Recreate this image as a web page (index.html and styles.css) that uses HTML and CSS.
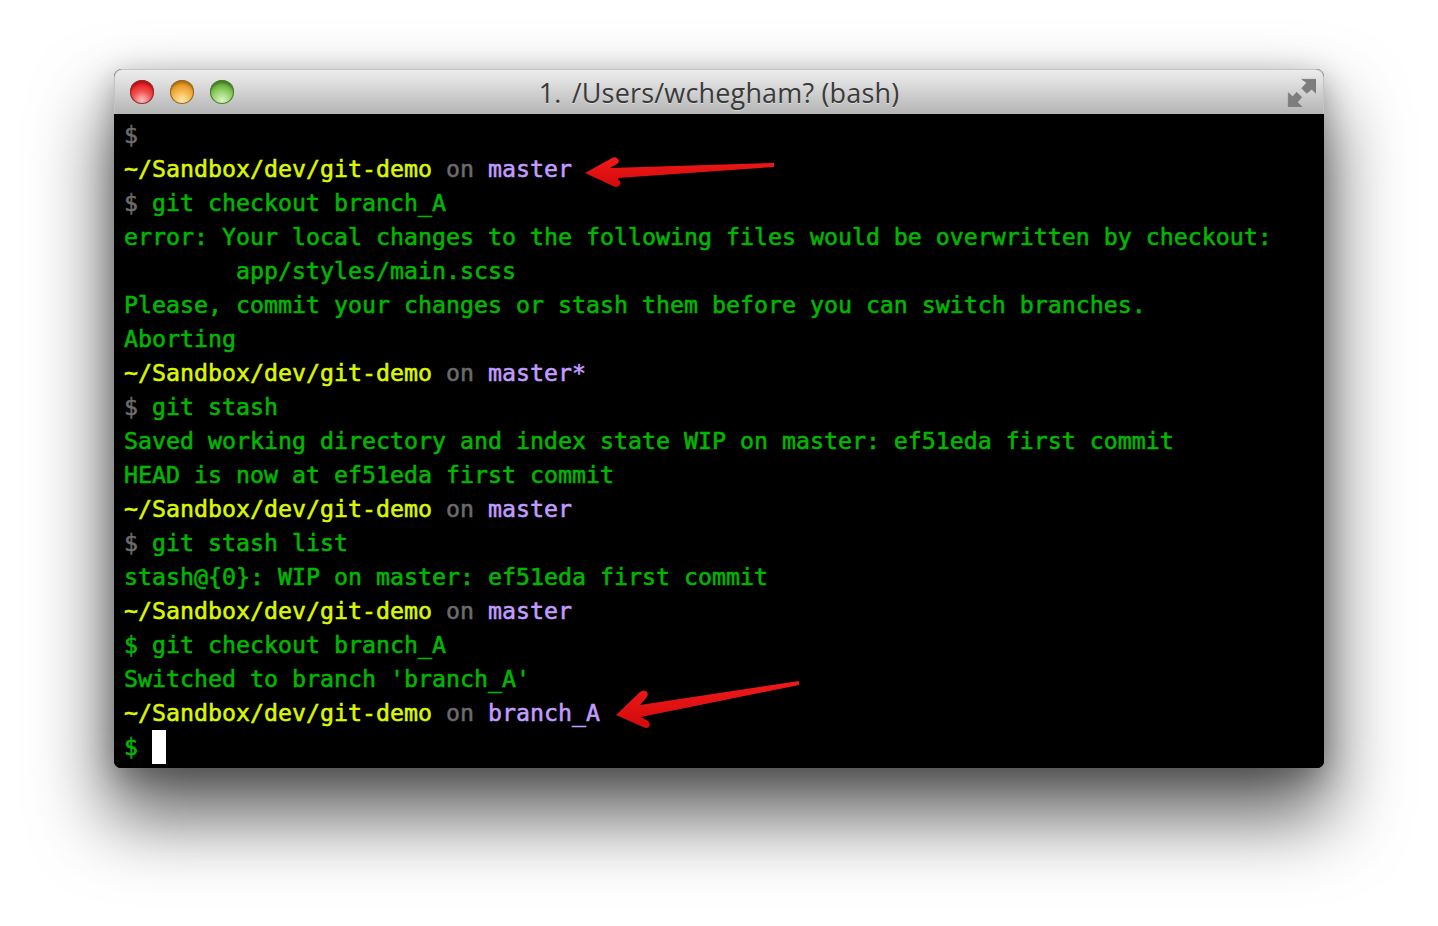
FILE: index.html
```html
<!DOCTYPE html>
<html lang="en">
<head>
<meta charset="utf-8">
<title>Terminal</title>
<link rel="stylesheet" href="styles.css">
</head>
<body>
<main class="window">
  <header class="titlebar">
    <div class="lights">
      <span class="light red"></span>
      <span class="light amber"></span>
      <span class="light green"></span>
    </div>
    <div class="title"><span class="title-num">1.</span> /Users/wchegham? (bash)</div>
    <svg class="fullscreen" width="30" height="30" viewBox="0 0 30 30">
      <path d="M15.700 2.300H30V16.300L25.700 12.300L20.700 16.300L15.700 11.300L20.700 5.700Z" fill="#7d7d7d" stroke="#6a6a6a" stroke-width=".5"/>
      <path d="M2.300 15.700L6.700 19.700L10.700 15.300L15.700 20.300L11.300 25.300L16 29.700H2.300Z" fill="#7d7d7d" stroke="#6a6a6a" stroke-width=".5"/>
    </svg>
  </header>
  <section class="term">
    <div class="line"><span class="gray">$</span></div>
    <div class="line"><span class="path">~/Sandbox/dev/git-demo</span> <span class="gray">on</span> <span class="branch">master</span></div>
    <div class="line"><span class="gray">$</span> <span class="out">git checkout branch_A</span></div>
    <div class="line out">error: Your local changes to the following files would be overwritten by checkout:</div>
    <div class="line out">        app/styles/main.scss</div>
    <div class="line out">Please, commit your changes or stash them before you can switch branches.</div>
    <div class="line out">Aborting</div>
    <div class="line"><span class="path">~/Sandbox/dev/git-demo</span> <span class="gray">on</span> <span class="branch">master*</span></div>
    <div class="line"><span class="gray">$</span> <span class="out">git stash</span></div>
    <div class="line out">Saved working directory and index state WIP on master: ef51eda first commit</div>
    <div class="line out">HEAD is now at ef51eda first commit</div>
    <div class="line"><span class="path">~/Sandbox/dev/git-demo</span> <span class="gray">on</span> <span class="branch">master</span></div>
    <div class="line"><span class="gray">$</span> <span class="out">git stash list</span></div>
    <div class="line out">stash@{0}: WIP on master: ef51eda first commit</div>
    <div class="line"><span class="path">~/Sandbox/dev/git-demo</span> <span class="gray">on</span> <span class="branch">master</span></div>
    <div class="line"><span class="out">$ git checkout branch_A</span></div>
    <div class="line out">Switched to branch 'branch_A'</div>
    <div class="line"><span class="path">~/Sandbox/dev/git-demo</span> <span class="gray">on</span> <span class="branch">branch_A</span></div>
    <div class="line"><span class="out">$</span> <span class="cursor"></span></div>
  </section>
  <svg class="arrow arrow-top" width="200" height="44" viewBox="0 0 200 44">
    <defs>
      <linearGradient id="ag1" x1="0" y1="0" x2="0" y2="1">
        <stop offset="0" stop-color="#f01a1a"/>
        <stop offset="1" stop-color="#d20a0a"/>
      </linearGradient>
    </defs>
    <path d="M1 20L28 5Q32 3 34 6Q36 9 33 11L26 15L190 10L190 14L34 25L34 26Q38 29 35.500 32.500Q33 35 29 33Z" fill="url(#ag1)"/>
  </svg>
  <svg class="arrow arrow-bottom" width="200" height="56" viewBox="0 0 200 56">
    <defs>
      <linearGradient id="ag2" x1="0" y1="0" x2="0" y2="1">
        <stop offset="0" stop-color="#f01a1a"/>
        <stop offset="1" stop-color="#d20a0a"/>
      </linearGradient>
    </defs>
    <path d="M1 35L25 12Q29 9 32 12Q34 15 31 18L25 25L184 1L184 5L26 37L33 41Q36 44 34 47Q32 49 28 47Z" fill="url(#ag2)"/>
  </svg>
</main>
</body>
</html>
```
FILE: styles.css
```css
* { box-sizing: border-box; }
html, body { margin: 0; height: 100%; }
body {
  background: #fff;
  padding: 69px 114px 0;
  overflow: hidden;
}
.window {
  position: relative;
  width: 1210px;
  height: 699px;
  border-radius: 8px 8px 7px 7px;
  background: #000;
  box-shadow: 0 44px 75px 6px rgba(0,0,0,.62), 0 8px 30px rgba(0,0,0,.28);
}
.titlebar {
  position: relative;
  height: 45px;
  display: flex;
  align-items: center;
  justify-content: center;
  border-radius: 8px 8px 0 0;
  background: linear-gradient(#ececec, #e0e0e0 25%, #b4b4b4);
  border: 1px solid #c4c4c4;
  border-bottom: 0;
}
.lights {
  position: absolute;
  left: 15px;
  top: 10px;
  display: flex;
  gap: 16px;
}
.light {
  width: 24px;
  height: 24px;
  border-radius: 50%;
  display: block;
}
.red {
  background: radial-gradient(circle at 50% 85%, #ffc4c4 0, #f15050 40%, #e21f1f 70%);
  box-shadow: inset 0 0 0 1px #8a3030, inset 0 3px 2px rgba(120,0,0,.45);
}
.amber {
  background: radial-gradient(circle at 50% 85%, #ffe9a8 0, #f5b44b 42%, #e0901c 72%);
  box-shadow: inset 0 0 0 1px #8c6a30, inset 0 3px 2px rgba(120,70,0,.45);
}
.green {
  background: radial-gradient(circle at 50% 85%, #dcf5c4 0, #92d068 42%, #5ea632 72%);
  box-shadow: inset 0 0 0 1px #4f7a38, inset 0 3px 2px rgba(30,80,0,.45);
}
.title {
  font-family: "Open Sans", sans-serif;
  font-size: 27px;
  line-height: 45px;
  letter-spacing: .17px;
  color: #3a3a3a;
  text-shadow: 0 1px 0 rgba(255,255,255,.45);
  white-space: pre;
}
.title-num { margin-right: 3px; }
.fullscreen {
  position: absolute;
  right: 7px;
  top: 7px;
}
.term {
  padding: 4px 10px;
  font-family: "DejaVu Sans Mono", monospace;
  font-size: 23.25px;
  height: 654px;
  border-radius: 0 0 7px 7px;
  background: #000;
  -webkit-text-stroke: .55px currentColor;
}
.line {
  height: 34px;
  line-height: 34px;
  white-space: pre;
}
.gray { color: #6c6c6c; }
.out { color: #00b800; }
.path { color: #dcf800; }
.branch { color: #c29cff; }
.cursor {
  display: inline-block;
  width: 14px;
  height: 34px;
  vertical-align: top;
  background: #fff;
}
.arrow { position: absolute; }
.arrow-top { left: 470px; top: 84px; }
.arrow-bottom { left: 501px; top: 611px; }
```
